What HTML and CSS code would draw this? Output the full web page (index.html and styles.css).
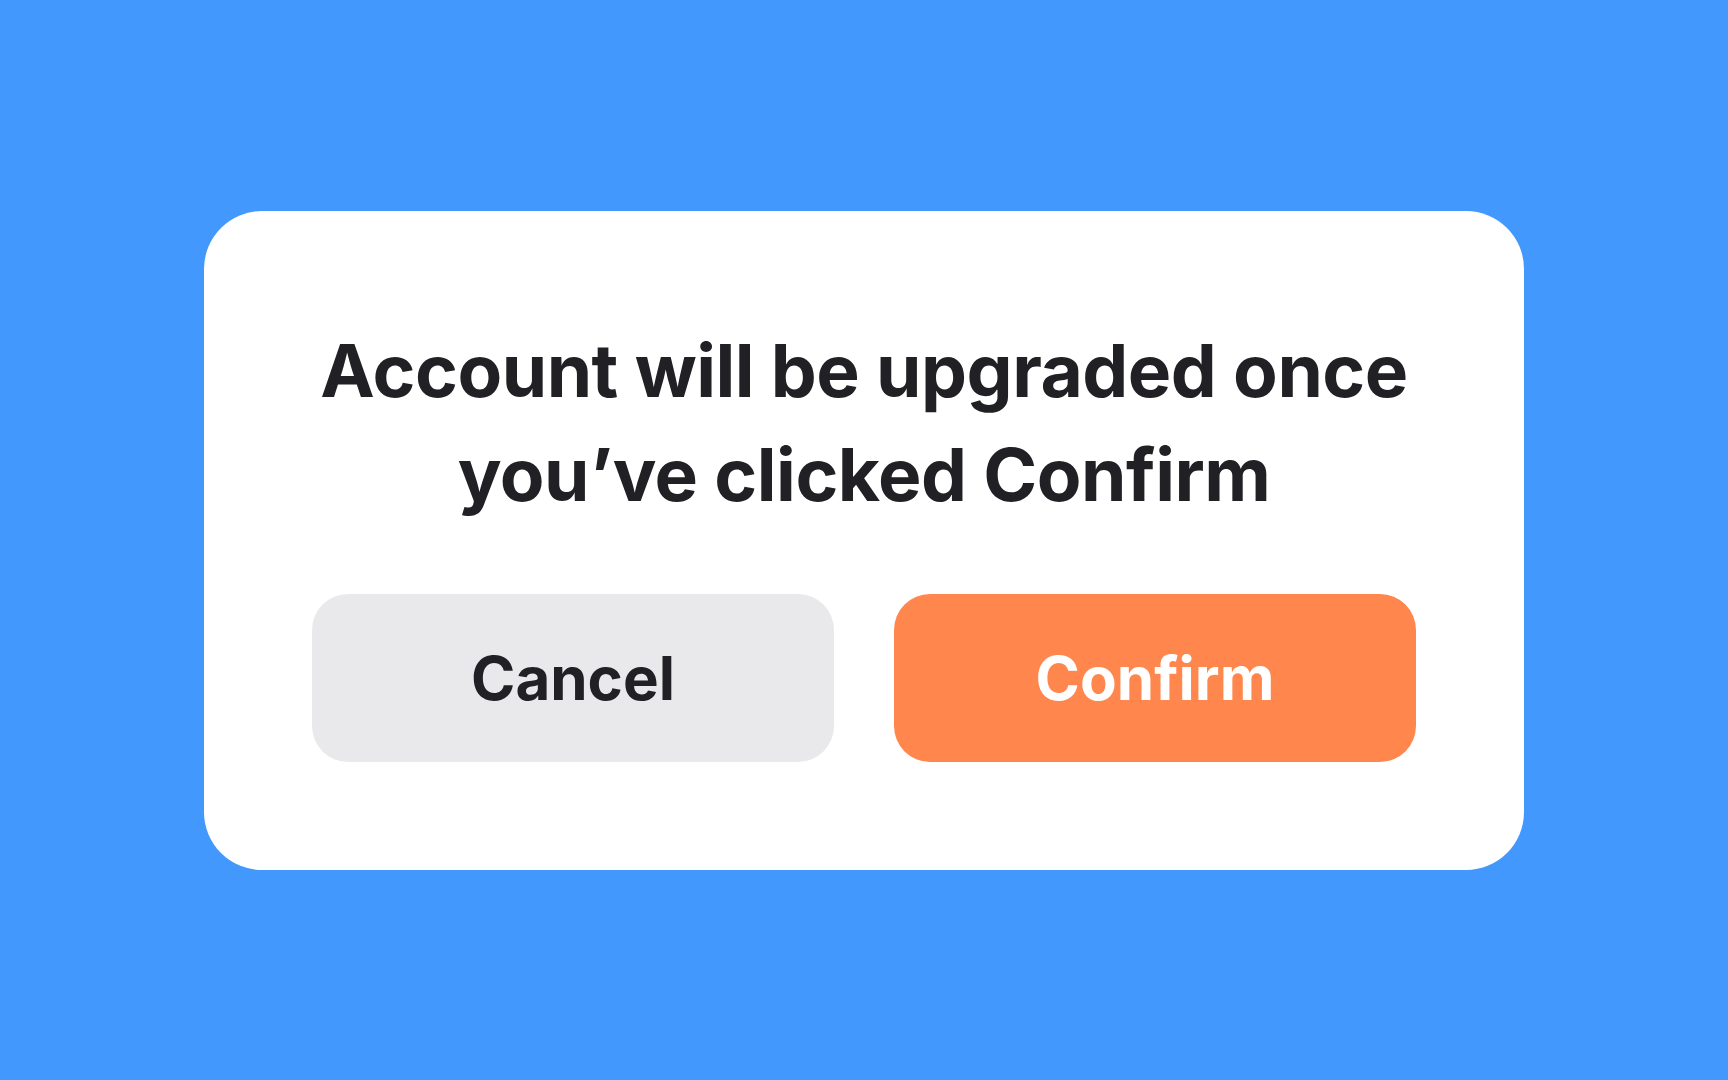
FILE: index.html
```html
<!DOCTYPE html>
<html lang="en">
<head>
    <meta charset="UTF-8">
    <meta name="viewport" content="width=device-width, initial-scale=1.0">
    <title>Upgrade account</title>
    <link rel="stylesheet" href="styles.css">
</head>
<body>
    <div class="dialog">
        <h1 class="dialog-title">Account will be upgraded once you’ve clicked Confirm</h1>
        <div class="dialog-actions">
            <button class="btn btn-cancel">Cancel</button>
            <button class="btn btn-confirm">Confirm</button>
        </div>
    </div>
</body>
</html>
```

FILE: styles.css
```css
html, body {
    height: 100%;
}
body {
    margin: 0;
    font-family: Inter, "Noto Sans", sans-serif;
    background-color: #4398fd;
    display: flex;
    align-items: center;
    justify-content: center;
}
.dialog {
    width: 1320px;
    box-sizing: border-box;
    padding: 108px;
    background-color: #fff;
    border-radius: 58px;
}
.dialog-title {
    margin: 0;
    font-size: 73px;
    line-height: 104px;
    font-weight: 700;
    text-align: center;
    color: #212125;
    letter-spacing: -0.5px;
}
.dialog-actions {
    display: grid;
    grid-template-columns: 1fr 1fr;
    gap: 60px;
    margin-top: 67px;
}
.btn {
    height: 168px;
    border: none;
    border-radius: 36px;
    font-family: inherit;
    font-size: 60px;
    font-weight: 700;
    cursor: pointer;
}
.btn-cancel {
    background-color: #e9e9eb;
    color: #212125;
}
.btn-confirm {
    background-color: #ff874d;
    color: #fff;
}
```
